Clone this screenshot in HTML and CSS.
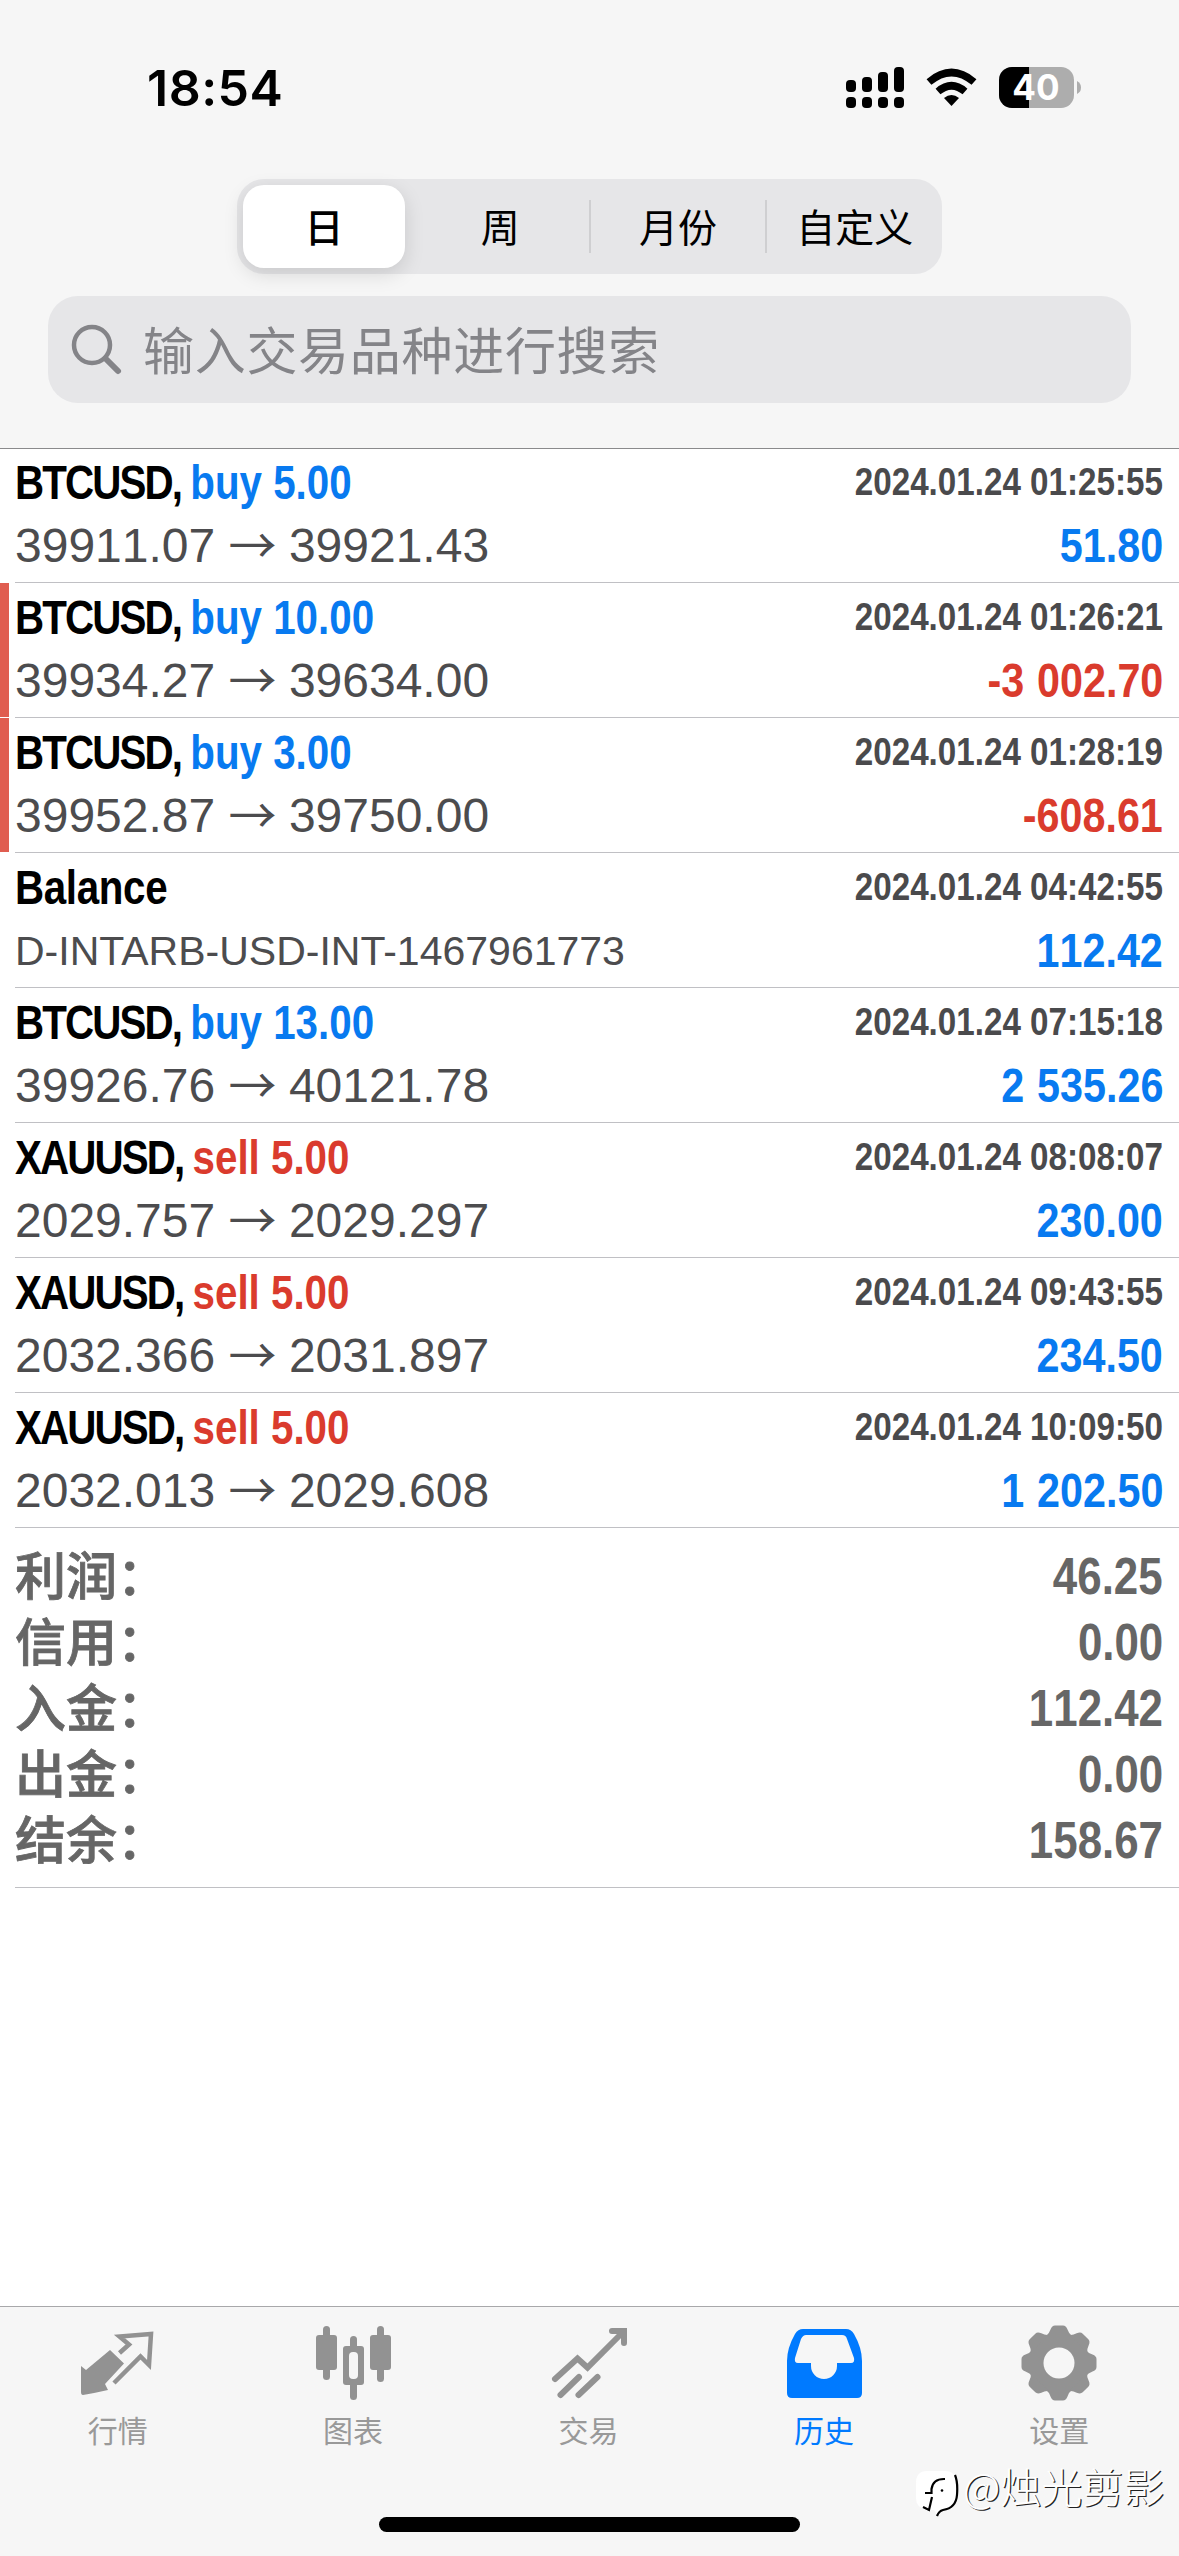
FILE: index.html
```html
<!DOCTYPE html>
<html lang="zh-CN">
<head>
<meta charset="utf-8">
<title>历史</title>
<link rel="stylesheet" href="styles.css">
</head>
<body>
<header class="header">
  <div class="status">
    <span class="time">18:54</span>
    <svg class="status-icons" width="240" height="46" viewBox="844 64 240 46">
      <g fill="#000">
        <rect x="846" y="80" width="10" height="12" rx="4"/><rect x="862" y="77" width="10" height="15" rx="4"/><rect x="878" y="72" width="10" height="20" rx="4"/><rect x="894" y="67" width="10" height="25" rx="4"/>
        <rect x="846" y="97" width="10" height="11" rx="4"/><rect x="862" y="97" width="10" height="11" rx="4"/><rect x="878" y="97" width="10" height="11" rx="4"/><rect x="894" y="97" width="10" height="11" rx="4"/>
      </g>
      <g fill="none" stroke="#000" stroke-width="7.5"><path d="M929 82Q951.500 63 974 82"/><path d="M938 91.500Q951.500 80 965 91.500"/></g>
      <path d="M944 98Q951.500 92 959 98L951.500 106Z"/>
      <rect x="999" y="67" width="75" height="41" rx="13" fill="#adadad"/>
      <path d="M1029 67H1012A13 13 0 0 0 999 80V95A13 13 0 0 0 1012 108H1029Z"/>
      <path d="M1077 81Q1081 83 1081 87.500T1077 94Z" fill="#adadad"/>
      <text class="battery-text" x="1036" y="100" text-anchor="middle">40</text>
    </svg>
  </div>
  <nav class="segments">
    <span class="segment segment-on">日</span><span class="segment">周</span><span class="segment segment-line">月份</span><span class="segment segment-line">自定义</span>
  </nav>
  <div class="search">
    <svg width="52" height="52" viewBox="0 0 52 52" fill="none" stroke="#848488" stroke-linecap="round"><circle cx="21" cy="21" r="18" stroke-width="4.500"/><path d="M34.500 34.500L47 47" stroke-width="6"/></svg>
    <span class="placeholder">输入交易品种进行搜索</span>
  </div>
</header>
<main class="main">
  <section class="deal first"><div class="line"><b class="title"><span class="symbol">BTCUSD, </span><span class="blue">buy 5.00</span></b><b class="date">2024.01.24 01:25:55</b></div><div class="line"><span class="price">39911.07 <i class="arrow">→</i> 39921.43</span><b class="amount blue">51.80</b></div></section>
  <section class="deal loss"><div class="line"><b class="title"><span class="symbol">BTCUSD, </span><span class="blue">buy 10.00</span></b><b class="date">2024.01.24 01:26:21</b></div><div class="line"><span class="price">39934.27 <i class="arrow">→</i> 39634.00</span><b class="amount red">-3 002.70</b></div></section>
  <section class="deal loss"><div class="line"><b class="title"><span class="symbol">BTCUSD, </span><span class="blue">buy 3.00</span></b><b class="date">2024.01.24 01:28:19</b></div><div class="line"><span class="price">39952.87 <i class="arrow">→</i> 39750.00</span><b class="amount red">-608.61</b></div></section>
  <section class="deal"><div class="line"><b class="title balance">Balance</b><b class="date">2024.01.24 04:42:55</b></div><div class="line"><span class="price comment">D-INTARB-USD-INT-1467961773</span><b class="amount blue">112.42</b></div></section>
  <section class="deal"><div class="line"><b class="title"><span class="symbol">BTCUSD, </span><span class="blue">buy 13.00</span></b><b class="date">2024.01.24 07:15:18</b></div><div class="line"><span class="price">39926.76 <i class="arrow">→</i> 40121.78</span><b class="amount blue">2 535.26</b></div></section>
  <section class="deal"><div class="line"><b class="title"><span class="symbol">XAUUSD, </span><span class="red">sell 5.00</span></b><b class="date">2024.01.24 08:08:07</b></div><div class="line"><span class="price">2029.757 <i class="arrow">→</i> 2029.297</span><b class="amount blue">230.00</b></div></section>
  <section class="deal"><div class="line"><b class="title"><span class="symbol">XAUUSD, </span><span class="red">sell 5.00</span></b><b class="date">2024.01.24 09:43:55</b></div><div class="line"><span class="price">2032.366 <i class="arrow">→</i> 2031.897</span><b class="amount blue">234.50</b></div></section>
  <section class="deal"><div class="line"><b class="title"><span class="symbol">XAUUSD, </span><span class="red">sell 5.00</span></b><b class="date">2024.01.24 10:09:50</b></div><div class="line"><span class="price">2032.013 <i class="arrow">→</i> 2029.608</span><b class="amount blue">1 202.50</b></div></section>
  <section class="summary">
    <div class="total"><span class="label">利润：</span><b class="amount">46.25</b></div>
    <div class="total"><span class="label">信用：</span><b class="amount">0.00</b></div>
    <div class="total"><span class="label">入金：</span><b class="amount">112.42</b></div>
    <div class="total"><span class="label">出金：</span><b class="amount">0.00</b></div>
    <div class="total"><span class="label">结余：</span><b class="amount">158.67</b></div>
  </section>
</main>
<footer class="footer">
  <nav class="tabs">
    <div class="tab"><svg width="80" height="80" viewBox="78 2322 80 80"><path d="M81 2366L86 2370L110 2350L124 2363.500L105 2384L108 2390Q95 2393 83 2395Q81 2395 81 2392Z" fill="#929292"/><path d="M119.500 2353L129 2344.500L119.500 2336.500L151 2334L149 2365L140.500 2356.500L114 2383" fill="none" stroke="#929292" stroke-width="4.500"/></svg><span>行情</span></div>
    <div class="tab"><svg width="80" height="80" viewBox="312 2322 80 80" fill="#929292"><rect x="322" y="2326" width="7" height="54" rx="3.500"/><rect x="315" y="2335" width="21" height="35" rx="3"/><rect x="376" y="2326" width="7" height="56" rx="3.500"/><rect x="369" y="2335" width="21" height="35" rx="3"/><rect x="349" y="2336" width="7" height="64" rx="3.500"/><rect x="342" y="2346" width="21" height="39" rx="3"/><rect x="348" y="2352" width="9" height="27" rx="4" fill="#f6f6f6"/></svg><span>图表</span></div>
    <div class="tab"><svg width="80" height="80" viewBox="548 2322 80 80" fill="none" stroke="#929292" stroke-width="6" stroke-linecap="round"><path d="M554 2379L576.500 2358.500L586.500 2367.500L622 2332M611 2331H623V2343M559.500 2395L578 2377M577.500 2395L596.500 2377"/></svg><span>交易</span></div>
    <div class="tab tab-on"><svg width="80" height="80" viewBox="783 2322 80 80"><path fill="#007aff" fill-rule="evenodd" d="M802 2329H845Q850 2329 853 2334Q861 2348 861 2361V2393Q861 2398 856 2398H791Q786 2398 786 2393V2361Q786 2348 794 2334Q797 2329 802 2329ZM805 2335Q802 2335 800 2339L794 2358Q793 2363 797 2363H810V2366A13 13 0 0 0 836 2366V2363H850Q854 2363 853 2358L846 2339Q845 2335 841 2335Z"/></svg><span>历史</span></div>
    <div class="tab"><svg width="80" height="80" viewBox="-40 -41 80 80"><g fill="#929292"><circle r="30"/><path id="tooth" d="M-13 -27Q-10 -29 -8.500 -33.500Q-7 -37.500 -4 -37.500H4Q7 -37.500 8.500 -33.500Q10 -29 13 -27Z"/><use href="#tooth" transform="rotate(45)"/><use href="#tooth" transform="rotate(90)"/><use href="#tooth" transform="rotate(135)"/><use href="#tooth" transform="rotate(180)"/><use href="#tooth" transform="rotate(225)"/><use href="#tooth" transform="rotate(270)"/><use href="#tooth" transform="rotate(315)"/></g><circle r="15.500" fill="#f6f6f6"/></svg><span>设置</span></div>
  </nav>
  <div class="home"></div>
  <div class="watermark"><svg width="44" height="48" viewBox="0 0 44 48"><path d="M12 1H30Q41 1 41 13V28Q41 37 30 39Q26 40 22 45L19 40H12Q1 38 1 28V13Q1 1 12 1Z" fill="#fff"/><path d="M10 23H16.500V19Q18 8.500 30 9M17 27L14 40L8 37M40 5Q43 12 42 25Q41 38 28 40Q24 41 22 46" fill="none" stroke="#000" stroke-width="2.200"/><circle cx="27" cy="20.500" r="1.300"/></svg><span>@烛光剪影</span></div>
</footer>
</body>
</html>
```
FILE: styles.css
```css
* { box-sizing: border-box; }
body { margin: 0; width: 1179px; height: 2556px; display: flex; flex-direction: column; background: #fff; font-family: "Liberation Sans", "Noto Sans CJK SC", sans-serif; font-kerning: none; color: #000; overflow: hidden; position: relative; }
.header { height: 449px; background: #f6f6f6; border-bottom: 1px solid #8a8a8c; display: flex; flex-direction: column; align-items: center; }
.status { width: 100%; height: 179px; padding: 64px 95px 0 147px; display: flex; justify-content: space-between; align-items: flex-start; }
.time { font: 600 50px/48px Inter, sans-serif; letter-spacing: .5px; }
.battery-text { font: 700 35px Inter, sans-serif; fill: #fff; }
.segments { width: 705px; height: 95px; padding: 6px 0 6px 6px; border-radius: 27px; background: #e6e6e8; display: flex; align-items: center; }
.segment { width: 177px; height: 53px; padding-bottom: 2px; display: flex; align-items: center; justify-content: center; font: 400 39px/51px "Noto Sans CJK SC", sans-serif; }
.segment-on { width: 162px; height: 83px; margin-right: 7px; background: #fff; border-radius: 21px; font-weight: 500; box-shadow: 0 6px 20px rgba(0, 0, 0, .13); }
.segment-line { border-left: 2px solid #cfcfd1; }
.search { width: 1083px; height: 107px; margin-top: 22px; padding: 0 23px; display: flex; align-items: center; gap: 20px; border-radius: 30px; background: #e6e6e8; }
.placeholder { padding-bottom: 4px; font: 400 51px/74px "Noto Sans CJK SC", sans-serif; letter-spacing: .7px; color: #848488; }
.main { flex: 1; }
.deal { height: 135px; padding: 3px 16px 0 15px; position: relative; }
.first { height: 134px; padding-top: 2px; }
.deal::after, .summary::after { content: ""; position: absolute; left: 15px; right: 0; bottom: 0; height: 1px; background: #c0c0c4; }
.loss::before { content: ""; position: absolute; left: 0; top: 0; width: 9px; height: 134px; background: #e05d50; }
.line { height: 63px; display: flex; justify-content: space-between; align-items: center; white-space: pre; }
.title { font-size: 48px; transform: scaleX(.84); transform-origin: left; }
.symbol { letter-spacing: -2.25px; }
.balance { letter-spacing: -.4px; }
.date { font-size: 38px; color: #4a4a4c; transform: scaleX(.873); transform-origin: right; }
.price { font-size: 48px; color: #4c4c4e; line-height: 60px; }
.comment { font-size: 41px; font-kerning: normal; }
.arrow { display: inline-block; width: 47px; font: 400 48px/1 "Noto Sans CJK SC", sans-serif; transform: translate(0, 1px); }
.amount { font-size: 48px; transform: scaleX(.86); transform-origin: right; word-spacing: 1.5px; }
.blue { color: #087af0; }
.red { color: #da3b2d; }
.summary { height: 360px; padding: 16px 16px 0 15px; position: relative; color: #666; }
.total { height: 66px; display: flex; justify-content: space-between; align-items: center; font-size: 51px; line-height: 60px; }
.label { font-weight: 500; -webkit-text-stroke: .8px #666; padding-top: 1px; }
.total .amount { font-size: 51px; }
.footer { height: 250px; background: #f6f6f6; border-top: 1px solid #a8a8aa; display: flex; flex-direction: column; align-items: center; position: relative; }
.tabs { width: 100%; height: 210px; padding: 15px 2px 0 0; display: flex; }
.tab { flex: 1; display: flex; flex-direction: column; align-items: center; font: 400 30px/40px "Noto Sans CJK SC", sans-serif; color: #999; gap: 7px; }
.tab-on { color: #007aff; }
.home { width: 421px; height: 15px; border-radius: 8px; background: #000; }
.watermark { position: absolute; left: 915px; top: 153px; display: flex; align-items: flex-start; gap: 4px; white-space: nowrap; font: 300 41px/50px "Noto Sans CJK SC", sans-serif; color: #fff; text-shadow: 1.200px 1.200px 0 #222; }
.watermark svg { margin-top: 10px; }
```
